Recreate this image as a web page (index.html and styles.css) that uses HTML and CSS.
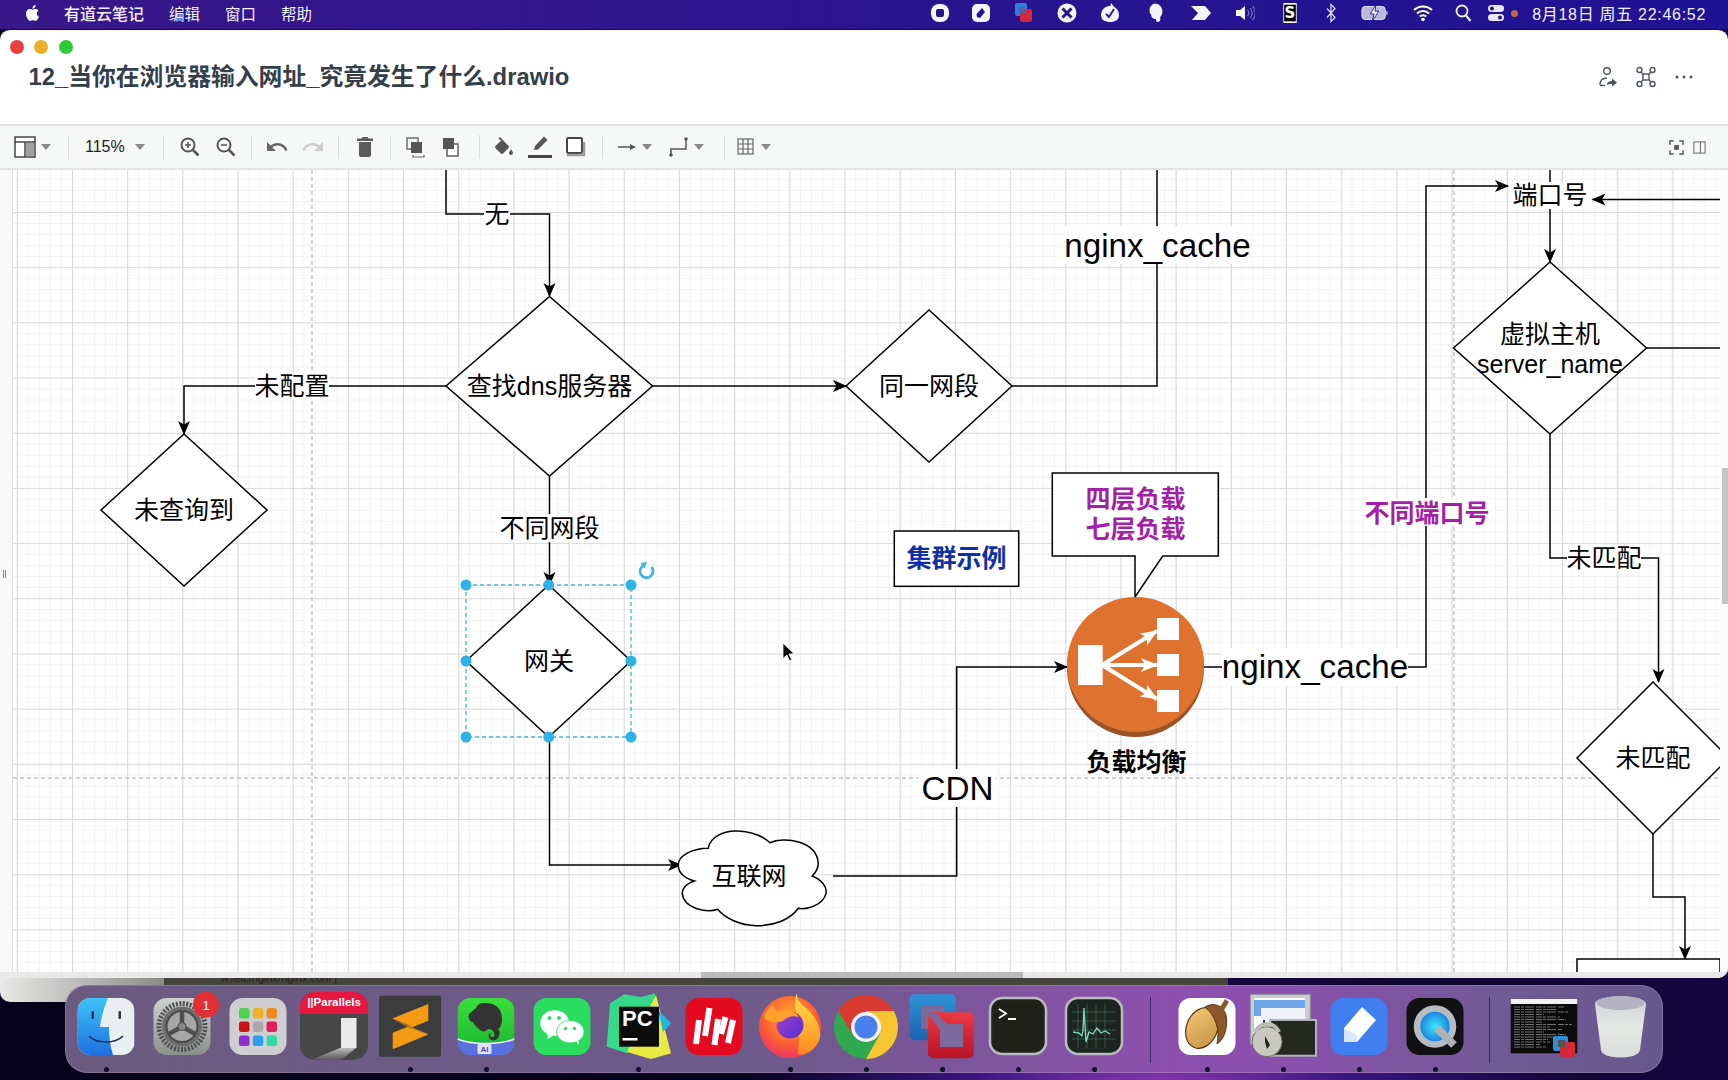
FILE: index.html
```html
<!DOCTYPE html>
<html lang="zh">
<head>
<meta charset="utf-8">
<title>12_当你在浏览器输入网址_究竟发生了什么.drawio</title>
<link rel="stylesheet" href="styles.css">
</head>
<body>
<div class="desktop">
  <header class="menubar">
    <div class="menu-left">
      <svg class="apple" viewBox="0 0 24 24"><path fill="#fff" d="M18.71 19.5c-.83 1.24-1.71 2.45-3.05 2.47-1.34.03-1.77-.79-3.29-.79-1.53 0-2 .77-3.27.82-1.31.05-2.3-1.32-3.14-2.53C4.25 17 2.94 12.45 4.7 9.39c.87-1.52 2.43-2.48 4.12-2.51 1.28-.02 2.5.87 3.29.87.78 0 2.26-1.07 3.81-.91.65.03 2.47.26 3.64 1.98-.09.06-2.17 1.28-2.15 3.81.03 3.02 2.65 4.03 2.68 4.04-.03.07-.42 1.44-1.38 2.83M13 3.5c.73-.83 1.94-1.46 2.94-1.5.13 1.17-.34 2.35-1.04 3.19-.69.85-1.83 1.51-2.95 1.42-.15-1.15.41-2.35 1.05-3.11z"/></svg>
      <span class="menu-app">有道云笔记</span>
      <span>编辑</span>
      <span>窗口</span>
      <span>帮助</span>
    </div>
    <div class="menu-right">
      <svg class="mi" viewBox="0 0 20 20"><rect x="1" y="1" width="18" height="18" rx="8" fill="#f4f4fa"/><rect x="6" y="6" width="8" height="8" rx="2" fill="#26148f"/></svg>
      <svg class="mi m-n2" viewBox="0 0 20 20"><rect x="1" y="1" width="18" height="18" rx="5" fill="#f4f4fa"/><path d="M11 5l3 4-5 6-3-1-.5-3z" fill="#26148f"/></svg>
      <svg class="mi" viewBox="0 0 20 20"><rect x="1" y="0" width="12" height="13" rx="2" fill="#2f7fd6"/><rect x="6" y="6" width="12" height="13" rx="2" fill="#d4283a"/><rect x="5" y="4" width="6" height="6" fill="#5a5aa8"/></svg>
      <svg class="mi" viewBox="0 0 20 20"><circle cx="10" cy="10" r="9.5" fill="#f4f4fa"/><path d="M5.5 5.5l9 9M14.5 5.5l-9 9" stroke="#26148f" stroke-width="3"/></svg>
      <svg class="mi" viewBox="0 0 20 20"><path d="M10 3c5 0 9 4 9 9s-4 7-9 7-9-2-9-7 4-9 9-9z" fill="#f4f4fa"/><path d="M6 11l3 3 5-8" stroke="#26148f" stroke-width="1.8" fill="none"/><path d="M11 0l3 4-4 1z" fill="#f4f4fa"/></svg>
      <svg class="mi m-p3" viewBox="0 0 20 20"><path d="M4 4l3-3c4-1 8 1 9 5 1 3 0 7-2 8 1 2 0 5-2 5s-2-2-2-3c-3 0-5-2-5-5-1 0-2-2-1-7z" fill="#f4f4fa"/></svg>
      <svg class="mi m-p2" viewBox="0 0 20 20"><path d="M0 3h10l6 7-6 7H1l6-7z M10 3h4l6 7-6 7h-4l6-7z" fill="#f4f4fa"/></svg>
      <svg class="mi m-p1" viewBox="0 0 20 20"><path d="M1 7h4l5-4v14l-5-4H1z" fill="#f4f4fa"/><path d="M12.5 7a4 4 0 0 1 0 6M15 5a7 7 0 0 1 0 10M17.5 3a10 10 0 0 1 0 14" stroke="#8f8fc8" fill="none"/></svg>
      <svg class="mi m-p2" viewBox="0 0 20 24"><rect x="2" y="0" width="16" height="24" fill="#fff"/><rect x="3" y="2" width="14" height="20" fill="#000"/><text class="mi-s" x="10" y="18">S</text></svg>
      <svg class="mi m-n2" viewBox="0 0 20 20"><path d="M6 5.500l8 9-4 4V1.500l4 4-8 9" stroke="#d8d8ee" stroke-width="1.300" fill="none"/></svg>
      <svg class="mi mi-wide" viewBox="0 0 30 20"><rect x="1" y="3" width="25" height="14" rx="3.500" fill="#b8b8dc" stroke="#e8e8f6"/><rect x="27" y="8" width="1.500" height="4" fill="#b8b8dc"/><path d="M16 1l-6 10h4l-2 8 7-11h-4z" fill="#fff" stroke="#26148f"/></svg>
      <svg class="mi m-wifi" viewBox="0 0 20 20"><path d="M1 7a13 13 0 0 1 18 0M4 10.500a8.500 8.500 0 0 1 12 0M6.800 13.500a4.500 4.500 0 0 1 6.400 0" stroke="#fff" stroke-width="2" fill="none"/><circle cx="10" cy="16.500" r="1.800" fill="#fff"/></svg>
      <svg class="mi m-find" viewBox="0 0 20 20"><circle cx="9" cy="8" r="5.500" stroke="#f4f4fa" stroke-width="1.800" fill="none"/><path d="M13 12.500l4.500 5.500" stroke="#f4f4fa" stroke-width="2"/></svg>
      <svg class="mi m-ctl" viewBox="0 0 20 20"><rect x="2" y="2" width="16" height="7" rx="3.500" fill="#e8e8f6"/><circle cx="6" cy="5.500" r="2" fill="#26148f"/><rect x="2" y="11" width="16" height="7" rx="3.500" fill="#e8e8f6"/><circle cx="14" cy="14.500" r="2" fill="#26148f"/></svg>
      <i class="rec-dot"></i>
      <span class="clock">8月18日 周五 22:46:52</span>
    </div>
  </header>

  <div class="backwin"></div>
  <div class="backwin-dark"><span class="backwin-text">vi   /etc/nginx/nginx.conf |</span></div>

  <main class="window">
    <div class="titlebar">
      <div class="lights"><i class="l-red"></i><i class="l-yellow"></i><i class="l-green"></i></div>
      <div class="title-row">
        <h1>12_当你在浏览器输入网址_究竟发生了什么.drawio</h1>
        <div class="title-actions">
          <svg class="ta" viewBox="0 0 22 22"><circle cx="10" cy="5" r="3.300" fill="none" stroke="#4c5660" stroke-width="1.400"/><path d="M3 19c0-5 3-7 7-7" fill="none" stroke="#4c5660" stroke-width="1.400"/><path d="M3 19.500h5" stroke="#4c5660" stroke-width="1.400"/><path d="M10 19c0-3 2-4 5-4v-2.500l5 4-5 4V18c-2 0-3.500 0-5 1z" fill="#4c5660"/></svg>
          <svg class="ta" viewBox="0 0 22 22"><g fill="none" stroke="#4c5660" stroke-width="1.400"><circle cx="4.500" cy="4" r="2.500"/><circle cx="17.500" cy="4" r="2.500"/><circle cx="4.500" cy="18" r="2.500"/><circle cx="17.500" cy="18" r="2.500"/><rect x="8" y="8" width="6" height="6"/><path d="M6 6l2 2M16 6l-2 2M6 16l2-2M16 16l-2-2"/></g></svg>
          <svg class="ta" viewBox="0 0 22 22"><circle cx="4" cy="11" r="1.500" fill="#4c5660"/><circle cx="11" cy="11" r="1.500" fill="#4c5660"/><circle cx="18" cy="11" r="1.500" fill="#4c5660"/></svg>
        </div>
      </div>
    </div>

    <div class="toolbar">
      <div class="tg g-view">
        <svg class="tb" viewBox="0 0 36 24"><rect x="8" y="2" width="20" height="20" fill="#fff" stroke="#444" stroke-width="1.500"/><path d="M8 7h20M18 7v15" stroke="#444" stroke-width="1.500"/><rect x="19" y="8" width="8" height="13" fill="#a0a0a0"/></svg>
        <i class="caret caret-view"></i>
      </div>
      <i class="tsep"></i>
      <div class="tg g-level"><span class="zoom-text">115%</span><i class="caret caret-level"></i></div>
      <i class="tsep"></i>
      <div class="tg g-zoom">
        <svg class="tb" viewBox="0 0 36 24"><circle cx="16" cy="10" r="6.500" fill="none" stroke="#555" stroke-width="2"/><path d="M13 10h6M16 7v6" stroke="#555" stroke-width="1.500"/><path d="M21 15l5.500 5.500" stroke="#555" stroke-width="2.500"/></svg>
        <svg class="tb" viewBox="0 0 36 24"><circle cx="16" cy="10" r="6.500" fill="none" stroke="#555" stroke-width="2"/><path d="M13 10h6" stroke="#555" stroke-width="1.500"/><path d="M21 15l5.500 5.500" stroke="#555" stroke-width="2.500"/></svg>
      </div>
      <i class="tsep"></i>
      <div class="tg g-hist">
        <svg class="tb" viewBox="-6 0 36 24"><path fill="#666" d="M12.500 8c-2.650 0-5.050.99-6.900 2.600L2 7v9h9l-3.620-3.620c1.390-1.160 3.160-1.880 5.120-1.880 3.540 0 6.550 2.310 7.600 5.500l2.370-.78C21.080 11.030 17.150 8 12.500 8z"/></svg>
        <svg class="tb" viewBox="-6 0 36 24"><path fill="#ccc" d="M18.400 10.600C16.550 8.990 14.150 8 11.500 8c-4.650 0-8.580 3.030-9.960 7.220L3.900 16c1.050-3.190 4.050-5.500 7.600-5.500 1.950 0 3.730.72 5.120 1.880L13 16h9V7l-3.600 3.600z"/></svg>
      </div>
      <i class="tsep"></i>
      <div class="tg g-del">
        <svg class="tb" viewBox="-6 0 36 24"><path fill="#5c5c5c" d="M6 20c0 1.100.9 2 2 2h8c1.100 0 2-.9 2-2V7H6v13zM20 3.500h-4.500l-1-1.500h-5l-1 1.500H4V6h16z"/></svg>
      </div>
      <i class="tsep"></i>
      <div class="tg g-order">
        <svg class="tb" viewBox="0 0 36 24"><rect x="10" y="3" width="11" height="11" fill="none" stroke="#666" stroke-width="1.400"/><rect x="14" y="7" width="11" height="11" fill="#555"/><path d="M16 20v2h11v-2" fill="none" stroke="#666" stroke-width="1.200"/></svg>
        <svg class="tb" viewBox="0 0 36 24"><rect x="10" y="3" width="11" height="11" fill="#555"/><rect x="14" y="9" width="11" height="12" fill="#fff" stroke="#555" stroke-width="1.400"/><rect x="14" y="9" width="7" height="5" fill="#555"/></svg>
      </div>
      <i class="tsep"></i>
      <div class="tg g-style">
        <svg class="tb" viewBox="-6 0 36 24"><path fill="#555" d="M16.560 10.940L8 2 6.600 3.400l2.400 2.400-5.560 5.140c-.59.59-.59 1.540 0 2.120l5.500 5.500c.29.29.68.44 1.060.44s.77-.15 1.060-.44l5.500-5.500c.59-.58.59-1.530 0-2.120zM19 14.500s-2 2.170-2 3.500c0 1.100.9 2 2 2s2-.9 2-2c0-1.330-2-3.500-2-3.500z"/></svg>
        <svg class="tb" viewBox="-6 0 36 24"><path fill="#555" d="M6 15l1-4L16 1.500l3.500 3.500L10 14.500z"/><rect x="0" y="20" width="24" height="3" fill="#444"/></svg>
        <svg class="tb" viewBox="-6 0 36 24"><rect x="3" y="3" width="15" height="15" rx="1.500" fill="#fff" stroke="#444" stroke-width="2"/><path d="M3 20h17V7" fill="none" stroke="#999" stroke-width="2.500"/></svg>
      </div>
      <i class="tsep"></i>
      <div class="tg g-conn">
        <svg class="tb-s" viewBox="0 0 20 24"><path d="M1 12h15" stroke="#555" stroke-width="1.500"/><path d="M13 9l6 3-6 3z" fill="#555"/></svg>
        <i class="caret caret-conn"></i>
        <svg class="tb-s tb-way" viewBox="0 0 20 24"><path d="M2 20v-6h15V5" fill="none" stroke="#555" stroke-width="1.500"/><circle cx="2" cy="20" r="1.800" fill="#555"/><circle cx="17" cy="4" r="1.800" fill="#555"/></svg>
        <i class="caret caret-conn"></i>
      </div>
      <i class="tsep"></i>
      <div class="tg g-table">
        <svg class="tb-s" viewBox="0 0 20 24"><g fill="none" stroke="#666" stroke-width="1.200"><rect x="2" y="4" width="15" height="15"/><path d="M7 4v15M12 4v15M2 9h15M2 14h15"/></g></svg>
        <i class="caret caret-conn"></i>
      </div>
      <div class="tb-right">
        <svg class="tb-r" viewBox="0 0 16 16"><path d="M1 5V1h4M11 1h4v4M15 11v4h-4M5 15H1v-4" fill="none" stroke="#555" stroke-width="1.600"/><rect x="5.500" y="5.500" width="5" height="5" fill="#555"/></svg>
        <svg class="tb-r" viewBox="0 0 16 16"><rect x="2" y="2" width="12" height="12" fill="none" stroke="#777" stroke-width="1.200"/><path d="M9 2v12" stroke="#777" stroke-width="1.200"/></svg>
      </div>
    </div>

    <div class="workspace">
      <div class="canvas-row">
        <div class="side-strip"><i class="grip"></i></div>
        <div class="canvas">
          <svg class="diagram" viewBox="13 170 1707 802">
            <defs>
              <marker id="arr" markerUnits="userSpaceOnUse" markerWidth="15" markerHeight="13" refX="13" refY="6.500" orient="auto"><path d="M0 .5L14 6.500 0 12.500 3.500 6.500z" fill="#000"/></marker>
              <marker id="warr" markerUnits="userSpaceOnUse" markerWidth="18" markerHeight="16" refX="16" refY="8" orient="auto"><path d="M0 1L17 8 0 15 4 8z" fill="#fff"/></marker>
            </defs>

            <line class="page" x1="312" y1="170" x2="312" y2="972"/>
            <line class="page" x1="1454" y1="170" x2="1454" y2="972"/>
            <line class="page" x1="13" y1="778" x2="1720" y2="778"/>

            <g class="edge">
              <path d="M446 170V214H549.500V296" marker-end="url(#arr)"/>
              <path d="M446 386H184V434" marker-end="url(#arr)"/>
              <path d="M652 386H846" marker-end="url(#arr)"/>
              <path d="M1012 386H1157V170"/>
              <path d="M549.500 476V585" marker-end="url(#arr)"/>
              <path d="M549.500 737V865H681" marker-end="url(#arr)"/>
              <path d="M833 876H956.700V667H1067" marker-end="url(#arr)"/>
              <path d="M1204 667H1426V186H1508" marker-end="url(#arr)"/>
              <path d="M1720 199.500H1592.500" marker-end="url(#arr)"/>
              <path d="M1550 170V262" marker-end="url(#arr)"/>
              <path d="M1646 348H1720"/>
              <path d="M1550 434V558H1658.500V682" marker-end="url(#arr)"/>
              <path d="M1653 834V897H1685V959" marker-end="url(#arr)"/>
            </g>

            <g class="node">
              <path d="M446 386L549.500 296.500 652.500 386 549.500 476z"/>
              <path d="M101 510L184 434 267 510 184 586z"/>
              <path d="M846 386L929 310 1012 386 929 462z"/>
              <path d="M466 661L548.700 585 631 661 548.700 737z"/>
              <path d="M1453.500 348L1550 262 1646.500 348 1550 434z"/>
              <path d="M1577 758L1653 682 1729 758 1653 834z"/>
              <path d="M1577 972V959H1720V972" />
              <rect x="894.300" y="531" width="124.400" height="55.300"/>
              <path d="M1052.300 473H1218.300V556H1162.700L1135 597V556H1052.300z"/>
              <path d="M678.300 865C678.300 855 693.300 848.300 708.300 848.300C710 836.700 725 830 738.300 831C751.700 831.700 763.300 836.700 770 842.700C783.300 836.700 816.700 840 818.300 863.300C818.300 868.300 815 873.300 812.300 876C821.700 880 827.300 886.700 826 893.300C823.300 905 806.700 910 798.300 908.300C790 920 773.300 926 756.700 925.700C740 925.300 725 918.300 717.700 909.300C706.700 913.300 683.300 908.300 682.300 893.300C682.300 887.300 688.300 882.700 694.300 881C685 878.300 678.300 873.300 678.300 865z"/>
            </g>

            <g class="lb-bg">
              <rect x="484" y="200" width="26" height="28"/>
              <rect x="255" y="372" width="74" height="28"/>
              <rect x="498" y="514" width="103" height="28"/>
              <rect x="1064" y="226" width="186" height="38"/>
              <rect x="918" y="769" width="78" height="38"/>
              <rect x="1222" y="648" width="186" height="38"/>
              <rect x="1365" y="498" width="124" height="28"/>
              <rect x="1512" y="182" width="76" height="27"/>
              <rect x="1567" y="544" width="74" height="28"/>
            </g>

            <text class="t" x="497" y="214">无</text>
            <text class="t" x="292" y="386">未配置</text>
            <text class="t" x="549.500" y="386">查找dns服务器</text>
            <text class="t" x="184" y="510">未查询到</text>
            <text class="t" x="929" y="386">同一网段</text>
            <text class="t" x="549.500" y="528">不同网段</text>
            <text class="t" x="549" y="661">网关</text>
            <text class="t" x="749" y="875.500">互联网</text>
            <text class="t" x="1550" y="195">端口号</text>
            <text class="t" x="1550" y="334">虚拟主机</text>
            <text class="t" x="1550" y="364">server_name</text>
            <text class="t" x="1604" y="558">未匹配</text>
            <text class="t" x="1653" y="758">未匹配</text>
            <text class="t-lg" x="1157.500" y="245">nginx_cache</text>
            <text class="t-lg" x="1315" y="666">nginx_cache</text>
            <text class="t-lg" x="957.500" y="788">CDN</text>
            <text class="t b purple" x="1427" y="512.500">不同端口号</text>
            <text class="t b purple" x="1135.500" y="499">四层负载</text>
            <text class="t b purple" x="1135.500" y="529">七层负载</text>
            <text class="t b blue" x="956.500" y="558">集群示例</text>
            <text class="t b" x="1136.500" y="761.500">负载均衡</text>

            <ellipse cx="1135.500" cy="668" rx="68.500" ry="69" fill="#9c5427"/>
            <ellipse cx="1135.500" cy="664.500" rx="68.500" ry="67.500" fill="#e07230"/>
            <g fill="#fff">
              <rect x="1078" y="645" width="24.700" height="40"/>
              <rect x="1157" y="618" width="22" height="22"/>
              <rect x="1157" y="654" width="22" height="22"/>
              <rect x="1157" y="690" width="22" height="22"/>
            </g>
            <g stroke="#fff" stroke-width="4" marker-end="url(#warr)">
              <line x1="1102" y1="665" x2="1157" y2="631"/>
              <line x1="1102" y1="665" x2="1157" y2="665"/>
              <line x1="1102" y1="665" x2="1157" y2="699"/>
            </g>

            <g class="selection">
              <rect x="466" y="585" width="165" height="152"/>
            </g>
            <g class="handles">
              <circle cx="466" cy="585" r="5.500"/><circle cx="548.700" cy="585" r="5.500"/><circle cx="631" cy="585" r="5.500"/>
              <circle cx="466" cy="661" r="5.500"/><circle cx="631" cy="661" r="5.500"/>
              <circle cx="466" cy="737" r="5.500"/><circle cx="548.700" cy="737" r="5.500"/><circle cx="631" cy="737" r="5.500"/>
            </g>
            <path d="M651.500 567a6.500 6.500 0 1 1-8-1.500" fill="none" stroke="#3fb5e3" stroke-width="2.800"/>
            <path d="M640.500 563l6.500-1-2.500 6.500z" fill="#3fb5e3"/>

            <path d="M783 643l0 15.500 3.800-3.500 2.700 5.800 2.200-1-2.700-5.700 5-.3z" fill="#000" stroke="#fff" stroke-width=".8"/>
          </svg>
        </div>
        <div class="vscroll"><i class="vthumb"></i></div>
      </div>
      <div class="hscroll"><i class="hthumb"></i></div>
    </div>
  </main>

  <footer class="dock">
    <div class="slot">
      <svg class="di" viewBox="0 0 76 76"><defs><linearGradient id="fb" x1="0" y1="0" x2="0" y2="1"><stop offset="0" stop-color="#3fc3f7"/><stop offset="1" stop-color="#1d6fe0"/></linearGradient><clipPath id="fc"><rect x="9.500" y="8" width="57" height="57" rx="13"/></clipPath></defs><g clip-path="url(#fc)"><rect x="9.500" y="8" width="57" height="57" fill="#e9eef2"/><path d="M9.500 8H40C36 18 33 28 32 37H41C41 46 42 56 45 65H9.500z" fill="url(#fb)"/></g><rect x="23.500" y="21" width="2.500" height="8" rx="1" fill="#1d3050"/><rect x="50.500" y="21" width="2.500" height="8" rx="1" fill="#333"/><path d="M21 46c8 8 26 8 34 0" fill="none" stroke="#1d2d48" stroke-width="1.600"/></svg><i class="ddot"></i>
    </div>
    <div class="slot">
      <svg class="di" viewBox="0 0 76 76"><defs><linearGradient id="sg" x1="0" y1="0" x2="0" y2="1"><stop offset="0" stop-color="#cfd3d0"/><stop offset="1" stop-color="#8b8f8c"/></linearGradient></defs><rect x="9.500" y="8" width="57" height="57" rx="13" fill="url(#sg)"/><circle cx="38" cy="36.500" r="23" fill="none" stroke="#4e4e4e" stroke-width="5" stroke-dasharray="2 1.500"/><circle cx="38" cy="36.500" r="20" fill="#6d6d6d"/><circle cx="38" cy="36.500" r="15.500" fill="#a6a6a6" stroke="#4a4a4a" stroke-width="2"/><path d="M38 36.500V21M38 36.500L25 44M38 36.500L51 44" stroke="#4f4f4f" stroke-width="4.500"/><circle cx="38" cy="36.500" r="4" fill="#888" stroke="#4a4a4a"/><circle cx="62" cy="14.700" r="13" fill="#e02f35"/><text class="badge" x="62" y="19.500">1</text></svg><i class="ddot ddot-off"></i>
    </div>
    <div class="slot">
      <svg class="di" viewBox="0 0 76 76"><rect x="9.500" y="8" width="57" height="57" rx="13" fill="#cfcfd2"/><g><rect x="19" y="18" width="10.500" height="10.500" rx="2.500" fill="#4fd24f"/><rect x="32.800" y="18" width="10.500" height="10.500" rx="2.500" fill="#f0b122"/><rect x="46.500" y="18" width="10.500" height="10.500" rx="2.500" fill="#ec8a20"/><rect x="19" y="31.500" width="10.500" height="10.500" rx="2.500" fill="#cc1515"/><rect x="32.800" y="31.500" width="10.500" height="10.500" rx="2.500" fill="#a8a8a8"/><rect x="46.500" y="31.500" width="10.500" height="10.500" rx="2.500" fill="#e01f5a"/><rect x="19" y="45.500" width="10.500" height="10.500" rx="2.500" fill="#8a30d0"/><rect x="32.800" y="45.500" width="10.500" height="10.500" rx="2.500" fill="#2a9ff0"/><rect x="46.500" y="45.500" width="10.500" height="10.500" rx="2.500" fill="#2fdca0"/></g></svg><i class="ddot ddot-off"></i>
    </div>
    <div class="slot">
      <svg class="di" viewBox="0 0 76 76"><defs><clipPath id="pc"><rect x="4" y="2" width="68" height="68" rx="15"/></clipPath><linearGradient id="pl" x1="0" y1="0" x2="0" y2="1"><stop offset="0" stop-color="#bbb"/><stop offset="1" stop-color="#555"/></linearGradient></defs><g clip-path="url(#pc)"><rect x="4" y="2" width="68" height="68" fill="#474747"/><rect x="4" y="2" width="68" height="22" fill="#e8173f"/><path d="M15 70L44 58H60L45 70z" fill="url(#pl)"/></g><rect x="45" y="28" width="15.500" height="30" fill="#eaecea"/><text class="par" x="38" y="16">||Parallels</text></svg><i class="ddot ddot-off"></i>
    </div>
    <div class="slot">
      <svg class="di" viewBox="0 0 76 76"><rect x="7" y="5.700" width="62" height="61" rx="2" fill="#3c3c3c"/><path d="M20.700 28.300L56.300 14V30.700L39 37.700L56.300 44.300V44.500L20.700 59.300V42.700L38 35.700L20.700 28.700z" fill="#f29a12"/><path d="M20.700 28.700L56.300 44.300 38 38z" fill="#c87a10"/></svg><i class="ddot"></i>
    </div>
    <div class="slot">
      <svg class="di" viewBox="0 0 76 76"><defs><linearGradient id="eg" x1="0" y1="0" x2="0" y2="1"><stop offset="0" stop-color="#3ade3c"/><stop offset="1" stop-color="#17b32f"/></linearGradient><clipPath id="ec"><rect x="9.500" y="8" width="57" height="57" rx="13"/></clipPath></defs><g clip-path="url(#ec)"><rect x="9.500" y="8" width="57" height="57" fill="url(#eg)"/><path d="M9.500 49C24 55 52 55 66.500 49V65H9.500z" fill="#5a6fe0"/><path d="M9.500 49C24 55 52 55 66.500 49" fill="none" stroke="#eef" stroke-width="1.500"/></g><path d="M21 24l7-6c2-4 4-5 9-5 8 0 14 3 16 10 2 7 1 14-3 16 2 2 2 4 1 7-1 4-6 6-9 3s-1-6 1-6c-1 2-1 4 1 4 2 1 3-2 2-4-1-3-3-4-6-4-2 3-6 3-8 1-4-3-6-6-7-8-3 0-5-3-4-8z" fill="#333"/><rect x="29.500" y="54" width="14" height="10" rx="1.500" fill="#dfe3ff"/><text class="ai" x="36.500" y="62">AI</text></svg><i class="ddot"></i>
    </div>
    <div class="slot">
      <svg class="di" viewBox="0 0 76 76"><rect x="9.500" y="8" width="57" height="57" rx="13" fill="#2bdd5f"/><g fill="#fff"><ellipse cx="30.700" cy="33" rx="14.500" ry="12.700"/><path d="M23 43l1 6 6-4z"/></g><g fill="#fff" stroke="#2bdd5f" stroke-width=".8"><ellipse cx="46.300" cy="41.700" rx="13.800" ry="11.300"/></g><path d="M51 50l4 5-1-7z" fill="#fff"/><g fill="#2bdd5f"><circle cx="25.500" cy="28" r="2"/><circle cx="35" cy="28" r="2"/><circle cx="41.500" cy="38.500" r="1.700"/><circle cx="50.500" cy="38.500" r="1.700"/></g></svg><i class="ddot ddot-off"></i>
    </div>
    <div class="slot">
      <svg class="di" viewBox="0 0 76 76"><path d="M10 13.300L24.300 4.300 41 7 55 3.300 56 28 27 63.300 6.700 56.700z" fill="#35d98a"/><path d="M56 5L71 63.300 51 69 27 62 40 35z" fill="#e8ea44"/><path d="M58 20L71.300 33.300 63 42z" fill="#22b8d8"/><rect x="19" y="16.700" width="40" height="40" fill="#0c0c0c"/><text class="pc" x="22" y="36">PC</text><rect x="22.500" y="48" width="15" height="2.500" fill="#fff"/></svg><i class="ddot"></i>
    </div>
    <div class="slot">
      <svg class="di" viewBox="0 0 76 76"><rect x="9.500" y="8" width="57" height="57" rx="13" fill="#e40a20"/><g stroke="#fff" stroke-width="6"><path d="M23 30L20 54"/><path d="M33.500 18L29 46"/><path d="M42 29L38.500 55"/><path d="M49.500 27L45 44"/><path d="M57 30L52 53"/></g></svg><i class="ddot ddot-off"></i>
    </div>
    <div class="slot">
      <svg class="di" viewBox="0 0 76 76"><defs><radialGradient id="ffo" cx=".5" cy=".35" r=".75"><stop offset="0" stop-color="#ffb02a"/><stop offset=".6" stop-color="#fb5a33"/><stop offset="1" stop-color="#e6247f"/></radialGradient><linearGradient id="ffy" x1="0" y1="0" x2="0" y2="1"><stop offset="0" stop-color="#ffe04a"/><stop offset="1" stop-color="#ff8a20"/></linearGradient><linearGradient id="ffp" x1="0" y1="0" x2="1" y2="1"><stop offset="0" stop-color="#b23fc0"/><stop offset="1" stop-color="#4b2fd8"/></linearGradient></defs><circle cx="38" cy="37" r="31" fill="url(#ffo)"/><path d="M45 3C44 12 52 15 59 23C67 32 71 44 66 53C60 63 50 66 46 64L48 32C44 24 41 12 45 3z" fill="url(#ffy)"/><circle cx="38" cy="35" r="13.500" fill="url(#ffp)"/><path d="M12 28C13 22 17 18 21 14C21 19 24 22 30 21C37 20 44 21 47 27C40 25 35 27 31 31C25 33 17 33 12 28z" fill="#ffa12a"/></svg><i class="ddot"></i>
    </div>
    <div class="slot">
      <svg class="di" viewBox="0 0 76 76"><circle cx="38" cy="37" r="32" fill="#2fa84f"/><path d="M65.700 21A32 32 0 0 1 38 69L52 44 38 21z" fill="#f6c531"/><path d="M10.300 21A32 32 0 0 1 65.700 21H38L24 44z" fill="#d93a2f"/><circle cx="38" cy="37" r="15" fill="#f4f4f8"/><circle cx="38" cy="37" r="11.500" fill="#4a80ee"/></svg><i class="ddot"></i>
    </div>
    <div class="slot">
      <svg class="di" viewBox="0 0 76 76"><defs><linearGradient id="vb" x1="0" y1="0" x2="0" y2="1"><stop offset="0" stop-color="#2f93d8"/><stop offset="1" stop-color="#1b62ac"/></linearGradient><linearGradient id="vr" x1="0" y1="0" x2="0" y2="1"><stop offset="0" stop-color="#ea3a42"/><stop offset="1" stop-color="#b81426"/></linearGradient></defs><rect x="5.700" y="4.300" width="46" height="46" rx="5" fill="url(#vb)"/><rect x="17" y="16" width="23" height="23" fill="#7c6a9c"/><rect x="24" y="22.300" width="45.700" height="46" rx="5" fill="url(#vr)"/><rect x="36" y="34" width="23" height="23" fill="#7c6a9c"/><path d="M24 24L33 24 52 43 52 50 44 50z" fill="#7c6a9c"/></svg><i class="ddot"></i>
    </div>
    <div class="slot">
      <svg class="di" viewBox="0 0 76 76"><rect x="10" y="8" width="56" height="56" rx="12" fill="#24251f" stroke="#b9bcc0" stroke-width="2.500"/><rect x="13" y="11" width="50" height="50" rx="9" fill="#202118"/><path d="M19 19l7 4.500-7 4.500" fill="none" stroke="#fff" stroke-width="1.800"/><rect x="28" y="28" width="8" height="2" fill="#fff"/></svg><i class="ddot"></i>
    </div>
    <div class="slot">
      <svg class="di" viewBox="0 0 76 76"><rect x="10" y="8" width="56" height="56" rx="12" fill="#1d2520" stroke="#b9bcc0" stroke-width="2.500"/><g stroke="#3e6a5c" stroke-width=".7"><path d="M16 22h44M16 31h44M16 40h44M16 49h44M22 14v44M31 14v44M40 14v44M49 14v44"/></g><path d="M17 42l6 1 3 3 1-6 1-22 2 34 3-10 4 2 4-6 4 5 4-2 5 3" fill="none" stroke="#7fdcc0" stroke-width="1.300"/></svg><i class="ddot"></i>
    </div>
    <i class="dock-sep"></i>
    <div class="slot">
      <svg class="di" viewBox="0 0 76 76"><defs><linearGradient id="ac" x1="0" y1="0" x2="1" y2="1"><stop offset="0" stop-color="#f0c878"/><stop offset="1" stop-color="#c8913f"/></linearGradient></defs><rect x="9.500" y="8" width="57" height="57" rx="12" fill="#fff"/><ellipse cx="33" cy="38" rx="15.500" ry="21" transform="rotate(22 33 38)" fill="url(#ac)" stroke="#5a3414" stroke-width="1.200"/><path d="M36 17C44 12 54 15 57 25C59 36 56 49 48 54C51 40 47 26 36 17z" fill="#8d5729" stroke="#5a3414"/><path d="M51 17L56 9 60 12 55 20z" fill="#8d5729"/></svg><i class="ddot"></i>
    </div>
    <div class="slot">
      <svg class="di" viewBox="0 0 76 76"><rect x="5.300" y="4.300" width="60" height="50" fill="#c8cccf" stroke="#8d9195"/><rect x="9" y="8" width="51" height="42" fill="#fff"/><rect x="9" y="10" width="51" height="16" fill="#6ea4e8"/><rect x="16" y="18" width="44" height="30" fill="#eef2f7"/><rect x="18" y="30" width="2" height="3" fill="#333"/><rect x="25.300" y="30" width="45.700" height="35.700" fill="#24281f" stroke="#b0b4b8" stroke-width="2"/><circle cx="22" cy="51.700" r="15" fill="#c9c9c1" stroke="#6b6b66"/><path d="M10 42a13 13 0 0 1 24 0" fill="none" stroke="#bdbdb5" stroke-width="4"/><path d="M20 46l5 9-3 4-2-7z" fill="#222"/></svg><i class="ddot"></i>
    </div>
    <div class="slot">
      <svg class="di" viewBox="0 0 76 76"><rect x="9.500" y="8" width="57" height="57" rx="13" fill="#3f7ff0"/><path d="M23 38L41 17 55 30 36 52H23z" fill="#fff"/><path d="M23 38L36 45V52H23z" fill="#dbe6fb"/></svg><i class="ddot"></i>
    </div>
    <div class="slot">
      <svg class="di" viewBox="0 0 76 76"><defs><radialGradient id="qc"><stop offset="0" stop-color="#3ce8ff"/><stop offset="1" stop-color="#1470d8"/></radialGradient></defs><rect x="9.500" y="8" width="57" height="57" rx="13" fill="#111"/><circle cx="38" cy="36.500" r="18" fill="url(#qc)" stroke="#b4bcc2" stroke-width="6.500"/><path d="M40 38l17 17" stroke="#aeb2b4" stroke-width="8"/></svg><i class="ddot"></i>
    </div>
    <i class="dock-sep dock-sep-b"></i>
    <div class="slot">
      <svg class="di" viewBox="0 0 76 76"><rect x="4.700" y="9" width="66.600" height="54.300" fill="#0b0b0b"/><rect x="4.700" y="9" width="66.600" height="5" fill="#f2f2f2"/><g stroke="#9a9a9a" stroke-width=".7" stroke-dasharray="6 1 3 1 9 2"><path d="M8 17h50M8 19.500h42M8 22h55M8 24.500h30M8 27h46M8 29.500h52M8 32h28M8 34.500h58M8 37h36M8 39.500h48M8 42h30M8 44.500h52M8 47h40M8 49.500h34M8 52h36M8 54.500h26M8 57h32"/></g><rect x="47" y="46" width="15" height="15" rx="2" fill="#2f8ed8"/><rect x="54" y="52" width="15" height="15" rx="2" fill="#d4283a"/><rect x="52" y="50" width="7" height="7" fill="#555"/></svg><i class="ddot ddot-off"></i>
    </div>
    <div class="slot">
      <svg class="di" viewBox="0 0 76 76"><defs><linearGradient id="tg" x1="0" y1="0" x2="0" y2="1"><stop offset="0" stop-color="#cfcfd8"/><stop offset=".5" stop-color="#e6e8e6"/><stop offset="1" stop-color="#d9dcd9"/></linearGradient></defs><path d="M13 14C13 4 64 4 64 14L58 60C57 70 20 70 19 60z" fill="url(#tg)"/><ellipse cx="38.500" cy="13" rx="24" ry="7" fill="#b5b3c2"/></svg><i class="ddot ddot-off"></i>
    </div>
  </footer>
</div>
</body>
</html>
```
FILE: styles.css
```css
* { box-sizing: border-box; }
html, body { margin: 0; height: 100%; }
body { overflow: hidden; background: #07021f; font-family: "Liberation Sans", "Noto Sans CJK SC", sans-serif; }
i { display: block; font-style: normal; }

.desktop {
  position: relative;
  width: 1728px;
  height: 1080px;
  overflow: hidden;
  background: radial-gradient(ellipse 420px 130px at 1160px 1090px, #8f3bb0 0%, #3a1680 45%, transparent 100%), linear-gradient(90deg, #06021c 0%, #07021f 60%, #14063f 100%);
}

/* Menu bar */
.menubar {
  height: 29px;
  display: flex;
  justify-content: space-between;
  align-items: center;
  padding: 0 22px 3px 23px;
  background: linear-gradient(90deg, #3a1788 0%, #2c158e 40%, #1f1293 100%);
  color: #f2f0fa;
  font-size: 15.500px;
  font-family: "Noto Sans CJK SC", sans-serif;
}
.menu-left { display: flex; align-items: center; gap: 25px; }
.menu-left span { line-height: 26px; }
.apple { width: 19px; height: 20px; margin-right: -3px; }
.menu-app { font-size: 16px; font-weight: 500; }
.menu-right { display: flex; align-items: center; gap: 23px; }
.mi { width: 20px; height: 20px; flex: none; }
.mi-wide { width: 28px; margin: 0 -4px 0 -3px; }
.m-n2 { margin-left: -2px; }
.m-p1 { margin-left: 1px; }
.m-p2 { margin-left: 2px; }
.m-p3 { margin-left: 3px; }
.m-wifi { margin-left: 5px; }
.m-find { margin-left: -3px; }
.m-ctl { margin-left: -10px; }
.mi-s { font: bold 18px "DejaVu Sans", sans-serif; fill: #fff; text-anchor: middle; }
.rec-dot { width: 7px; height: 7px; border-radius: 50%; background: #b86b4a; margin-left: -18px; }
.clock { margin-left: -9px; font-size: 16px; letter-spacing: .7px; white-space: nowrap; font-family: "Liberation Sans", "Noto Sans CJK SC", sans-serif; }

/* Windows behind */
.backwin {
  position: absolute; left: 0; top: 900px; width: 164px; height: 102px;
  border-radius: 0 0 10px 10px;
  background: linear-gradient(90deg, #e8e8e6, #8a8c88);
}
.backwin-dark {
  position: absolute; left: 164px; top: 900px; width: 1064px; height: 90px;
  background: #45453e; color: #222; font-size: 11px;
  display: flex; align-items: flex-end; padding: 0 0 2px 56px;
}
.backwin-text { line-height: 10px; transform: translateY(-5px); }

/* Main window */
.window {
  position: absolute; left: 0; top: 29px; width: 1728px; height: 949px;
  border-radius: 10px;
  background: #fff;
  display: flex; flex-direction: column;
  overflow: hidden;
  border-top: 1px solid #14102a;
}
.titlebar { height: 94px; padding: 10px 0 0 9.5px; flex: none; }
.lights { display: flex; gap: 10.5px; }
.lights i { width: 14px; height: 14px; border-radius: 50%; }
.l-red { background: #ea3f41; }
.l-yellow { background: #e9b02b; }
.l-green { background: #2ecb39; }
.title-row { display: flex; justify-content: space-between; align-items: center; padding: 7px 33px 0 19px; }
h1 { margin: 0; font-size: 23.800px; line-height: 32px; font-weight: 700; color: #333f4b; white-space: nowrap; font-family: "Liberation Sans", "Noto Sans CJK SC", sans-serif; }
.title-actions { display: flex; gap: 16px; }
.ta { width: 22px; height: 22px; }

/* Toolbar */
.toolbar {
  height: 46px; flex: none;
  display: flex; align-items: center;
  background: #f6f8f7;
  border-top: 2px solid #e2e4e3;
  border-bottom: 2px solid #e2e4e3;
}
.tg { display: flex; align-items: center; height: 100%; flex: none; }
.tsep { width: 1px; height: 24px; background: #dcdedd; flex: none; }
.g-view { width: 68px; padding-left: 7px; }
.g-level { width: 94px; padding-left: 16px; }
.g-zoom { width: 87px; padding-left: 8px; }
.g-hist { width: 86px; padding-left: 7px; }
.g-del { width: 51px; padding-left: 8px; }
.g-order { width: 88px; padding-left: 6px; }
.g-style { width: 122px; padding-left: 6px; }
.g-conn { width: 121px; padding-left: 14px; }
.g-table { width: 60px; padding-left: 11px; }
.tb { width: 36px; height: 24px; flex: none; }
.tb-s { width: 20px; height: 24px; flex: none; }
.tb-way { margin-left: 17px; }
.caret { width: 0; height: 0; border-left: 5.5px solid transparent; border-right: 5.5px solid transparent; border-top: 6px solid #8a8a8a; flex: none; }
.caret-view { margin-left: -2px; }
.caret-level { margin-left: 10px; }
.caret-conn { margin-left: 5px; }
.zoom-text { font-size: 16px; color: #222; }
.tb-right { margin-left: auto; display: flex; gap: 8px; padding-right: 21px; }
.tb-r { width: 15px; height: 15px; }

/* Canvas */
.workspace { flex: 1; display: flex; flex-direction: column; min-height: 0; }
.canvas-row { flex: 1; display: flex; min-height: 0; }
.side-strip { width: 13px; flex: none; background: #f8f9f8; border-right: 1px solid #dfe1e0; display: flex; align-items: center; justify-content: center; }
.grip { width: 3px; height: 8px; border-left: 1px solid #888; border-right: 1px solid #888; margin-right: 3px; margin-top: 5px; }
.canvas {
  flex: 1; position: relative; min-width: 0; overflow: hidden;
  background-color: #fdfefd;
  background-image:
    linear-gradient(90deg, #d9dbda 1px, transparent 1px),
    linear-gradient(#d9dbda 1px, transparent 1px),
    linear-gradient(90deg, #f2f4f3 1px, transparent 1px),
    linear-gradient(#f2f4f3 1px, transparent 1px);
  background-size: 55.2px 55.2px, 55.2px 55.2px, 11.04px 11.04px, 11.04px 11.04px;
  background-position: 3.8px 42px, 3.8px 42px, 3.8px 42px, 3.8px 42px;
}
.diagram { display: block; width: 1707px; height: 802px; }
.page { stroke: #bfc1c0; stroke-width: 1.3; stroke-dasharray: 4 3; }
.edge path { fill: none; stroke: #000; stroke-width: 1.5; }
.node path, .node rect { fill: #fff; stroke: #000; stroke-width: 1.5; }
.lb-bg rect { fill: #fff; }
.t, .t-lg { text-anchor: middle; dominant-baseline: central; fill: #000; font-family: "Liberation Sans", "Noto Sans CJK SC", sans-serif; }
.t { font-size: 25px; }
.t-lg { font-size: 33.200px; }
.b { font-weight: 700; }
.purple { fill: #a41ea8; }
.blue { fill: #0d2fa8; }
.selection rect { fill: none; stroke: #3fb5e3; stroke-width: 1.3; stroke-dasharray: 4 3; }
.handles circle { fill: #2fb3e6; }

.vscroll { width: 8px; flex: none; background: #fbfcfb; position: relative; padding-top: 298px; }
.vthumb { width: 6px; height: 136px; margin-left: 2px; background: #c4c6c5; }
.hscroll { height: 6px; flex: none; background: #e8e9e8; padding-left: 701px; }
.hthumb { width: 322px; height: 6px; background: #b9bbba; }

/* Dock */
.dock {
  position: absolute; left: 65px; top: 985px; width: 1598px; height: 88px;
  border-radius: 22px;
  display: flex; align-items: flex-start;
  padding: 5px 0 0 3px;
  background: linear-gradient(90deg, #6b5b80 0%, #6f5a8c 45%, #8e4fae 70%, #8b4fae 76%, #705a94 90%, #66588c 100%);
  box-shadow: inset 0 0 0 1px rgba(255,255,255,.18);
}
.slot { width: 76px; flex: none; display: flex; flex-direction: column; align-items: center; }
.di { width: 76px; height: 76px; display: block; overflow: visible; }
.ddot { width: 5px; height: 5px; border-radius: 50%; background: #10102a; margin-top: 1px; }
.ddot-off { background: transparent; }
.dock-sep { width: 1px; height: 66px; margin: 7px 18px 0 18px; background: #3d2a66; flex: none; }
.dock-sep-b { margin: 7px 16px 0 16px; }
.badge { font: 13px "Liberation Sans", sans-serif; fill: #fff; text-anchor: middle; }
.par { font: bold 11.5px "Liberation Sans", sans-serif; fill: #fff; text-anchor: middle; }
.ai { font: bold 8px "Liberation Sans", sans-serif; fill: #3f4fc0; text-anchor: middle; }
.pc { font: bold 22px "Liberation Sans", sans-serif; fill: #fff; }
```
